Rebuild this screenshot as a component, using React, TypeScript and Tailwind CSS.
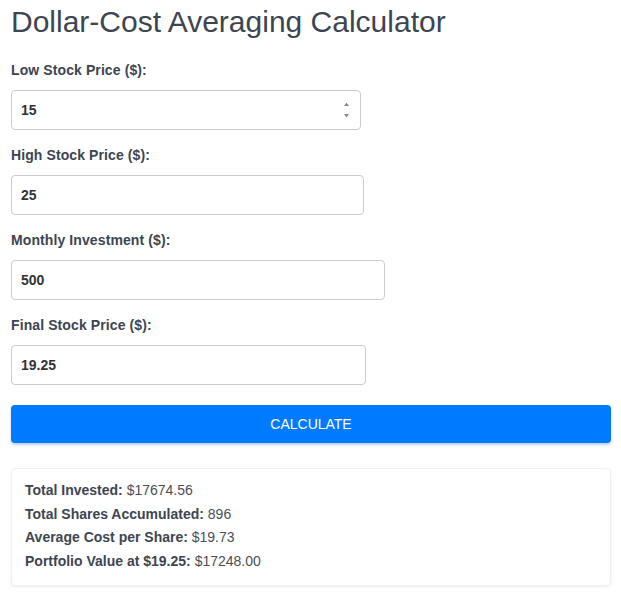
import React from "react";

const fields = [
  { label: "Low Stock Price ($):", value: "15", w: "w-[350px]", spin: true },
  { label: "High Stock Price ($):", value: "25", w: "w-[353px]", spin: false },
  { label: "Monthly Investment ($):", value: "500", w: "w-[374px]", spin: false },
  { label: "Final Stock Price ($):", value: "19.25", w: "w-[355px]", spin: false },
];

const results = [
  { k: "Total Invested:", v: "$17674.56" },
  { k: "Total Shares Accumulated:", v: "896" },
  { k: "Average Cost per Share:", v: "$19.73" },
  { k: "Portfolio Value at $19.25:", v: "$17248.00" },
];

export default function App() {
  return (
    <div
      className="pl-[11px] pr-[10px] pt-[4px] pb-[6px] bg-white text-[#3d4551]"
      style={{ fontFamily: '"Liberation Sans", Arial, sans-serif' }}
    >
      <h1 className="text-[30px] leading-[36px] font-normal text-[#3d4551] mb-[20px]">
        Dollar-Cost Averaging Calculator
      </h1>
      {fields.map((f, i) => (
        <div key={i} className={i === fields.length - 1 ? "mb-[20px]" : "mb-[15px]"}>
          <label className="block text-[14px] leading-[20px] font-bold text-[#3d4551] mb-[10px] tracking-[0.1px]">
            {f.label}
          </label>
          <div className={`relative ${f.w}`}>
            <input
              type="text"
              readOnly
              value={f.value}
              className="block w-full h-[40px] border border-[#cccccc] rounded-[4px] px-[9px] text-[14px] font-bold text-[#333333] bg-white outline-none"
              style={{ fontFamily: '"Liberation Sans", Arial, sans-serif' }}
            />
            {f.spin && (
              <svg
                className="absolute right-[11px] top-[10px]"
                width="7"
                height="20"
                viewBox="0 0 7 20"
              >
                <path d="M1 6 L3.5 2.5 L6 6 Z" fill="#8a8a8a" />
                <path d="M1 14 L3.5 17.5 L6 14 Z" fill="#8a8a8a" />
              </svg>
            )}
          </div>
        </div>
      ))}
      <button className="block w-full h-[38px] rounded-[4px] bg-[#007bff] text-white text-[14px] uppercase shadow-[0_2px_3px_rgba(0,60,200,0.25)] mb-[25px]">
        Calculate
      </button>
      <div className="border border-[#f0f0f0] rounded-[4px] shadow-[0_1px_3px_rgba(0,0,0,0.08)] pl-[13px] pt-[10px] pb-[12px]">
        {results.map((r, i) => (
          <div key={i} className="text-[14px] leading-[23.5px]">
            <span className="font-bold text-[#3d4551]">{r.k}</span>{" "}
            <span className="text-[#4a4f57]">{r.v}</span>
          </div>
        ))}
      </div>
    </div>
  );
}
